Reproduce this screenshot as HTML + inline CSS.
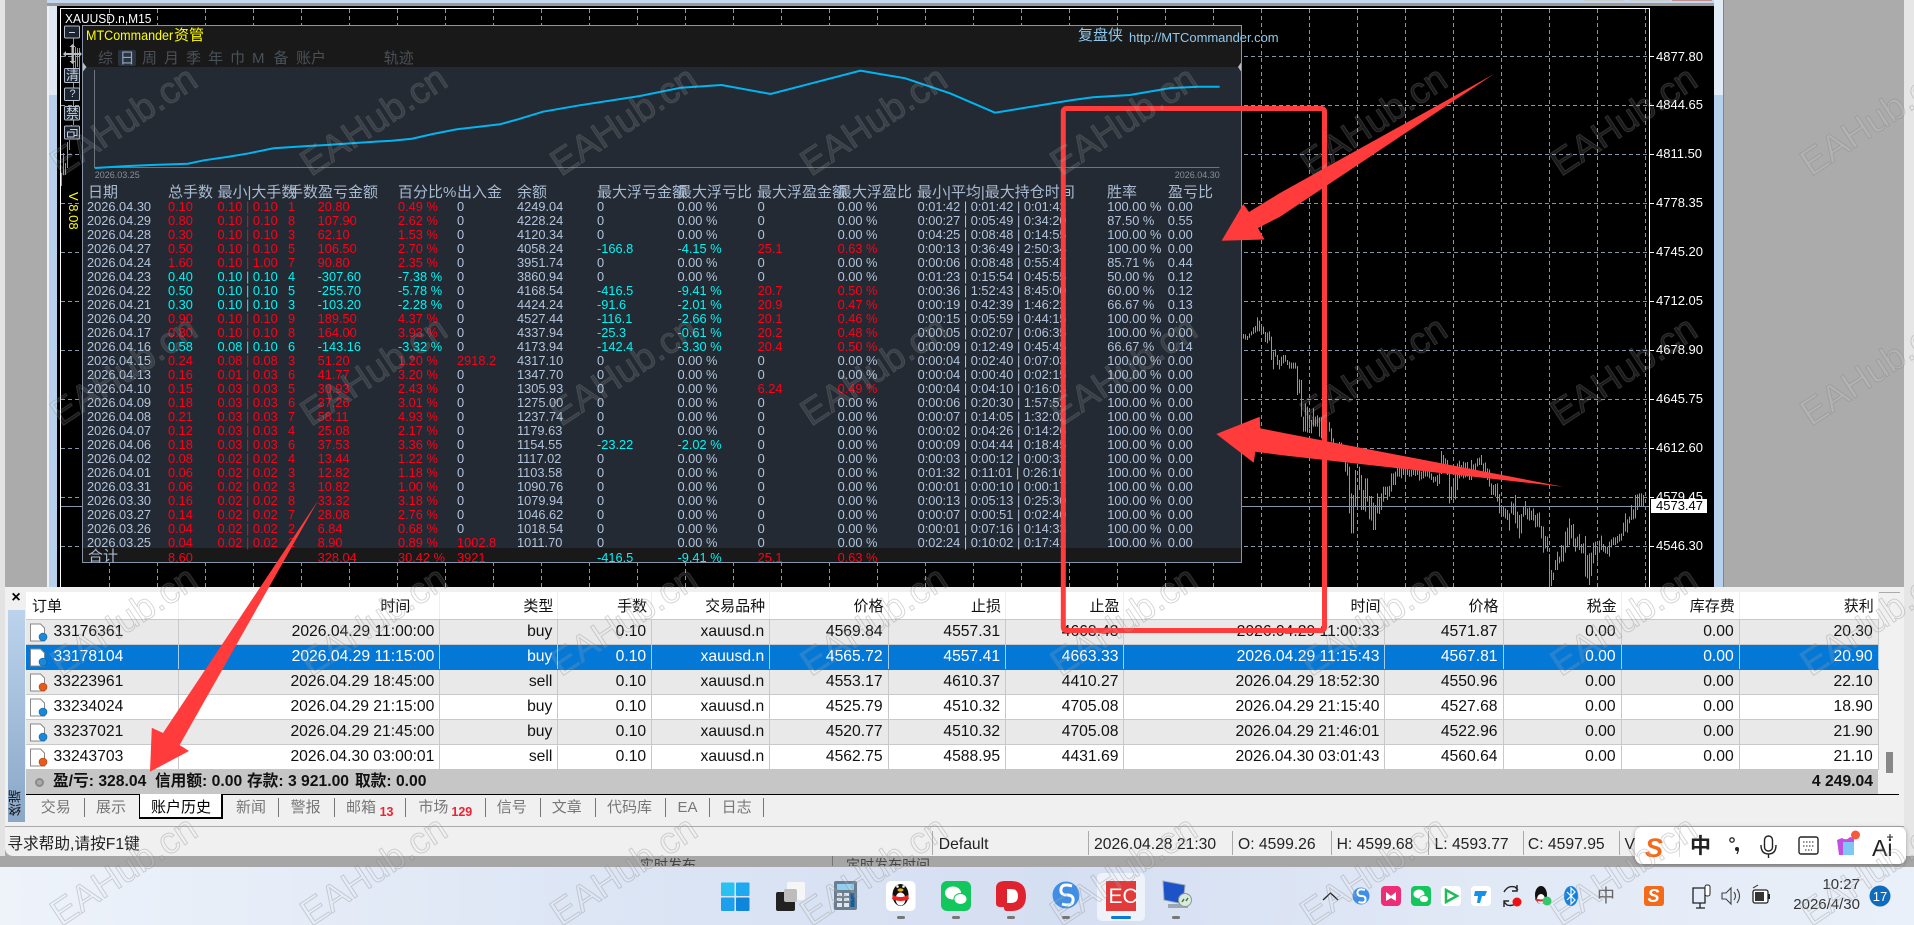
<!DOCTYPE html>
<html lang="zh"><head><meta charset="utf-8"><title>MTCommander</title>
<style>
*{box-sizing:border-box}
html,body{margin:0;padding:0;width:1914px;height:925px;overflow:hidden;background:#aaa;font-family:"Liberation Sans","Noto Sans CJK SC",sans-serif}
.a{position:absolute}
svg.a{left:0;top:0;overflow:visible}
.r{position:absolute;left:0;height:14px;line-height:14px;font-size:12.8px;color:#b2c4dc;margin-top:1px}
.r span{position:absolute;top:0;white-space:pre}
.r span:nth-child(1){left:87px}.r span:nth-child(2){left:168px}.r span:nth-child(3){left:217.5px}.r span:nth-child(4){left:288px}.r span:nth-child(5){left:317.6px}.r span:nth-child(6){left:398px}.r span:nth-child(7){left:457px}.r span:nth-child(8){left:517px}.r span:nth-child(9){left:597px}.r span:nth-child(10){left:677.5px}.r span:nth-child(11){left:757.6px}.r span:nth-child(12){left:837.6px}.r span:nth-child(13){left:917.6px}.r span:nth-child(14){left:1107.3px}.r span:nth-child(15){left:1167.8px}
.x span:nth-child(n+2):nth-child(-n+6){color:#ff0018}
.y span:nth-child(n+2):nth-child(-n+6){color:#00f6f6}
.r span.R{color:#ff0018}.r span.C{color:#00f6f6}
.h{position:absolute;font-size:15px;line-height:18px;color:#a9bbd2;top:183.5px;white-space:pre}
.t{position:absolute;font-size:15px;line-height:18px;color:#4a5058;top:50px}
.pl{position:absolute;left:1656px;font-size:13px;line-height:14px;color:#fff}
table{position:absolute;left:26px;top:592px;width:1852px;border-collapse:collapse;table-layout:fixed;font-size:15.7px;color:#111}
td,th{height:25px;padding:1px 5px 0 0;text-align:right;border-right:1px solid #c9c9c9;border-bottom:1px solid #c9c9c9;white-space:nowrap;overflow:hidden;font-weight:400}
th{height:27px;font-size:15px;border-right:1px solid #eee;padding-right:4px}
td:first-child,th:first-child{text-align:left;padding-left:27.5px}
th:first-child{padding-left:6px}
tr.g td{background:#e9e9e9}
tr.w td{background:#fff}
tr.s td{background:#0478d7;color:#fff;border-right-color:#a5cdf0;border-bottom-color:#0478d7}
.su{position:absolute;top:772px;font-weight:700;font-size:15.7px;line-height:20px;color:#111;white-space:pre}
.tb{position:absolute;top:798px;font-size:15px;line-height:20px;color:#777}
.sp{position:absolute;top:798px;width:1px;height:19px;background:#777}
.st{position:absolute;top:835px;font-size:15.7px;line-height:20px;color:#222;white-space:pre}
.ss{position:absolute;top:831px;width:1px;height:24px;background:#aaa}
.dot{position:absolute;top:916px;width:8px;height:3px;border-radius:2px;background:#777}
</style></head><body>

<!-- outer backgrounds -->
<div class="a" style="left:0;top:0;width:5px;height:866px;background:#e3e3e3"></div>
<div class="a" style="left:5px;top:0;width:42px;height:590px;background:#ababab"></div>
<div class="a" style="left:47px;top:0;width:2px;height:590px;background:#eef2f7"></div>
<div class="a" style="left:49px;top:0;width:8px;height:95px;background:#dde8f4"></div>
<div class="a" style="left:49px;top:95px;width:8px;height:495px;background:#b7d1ec"></div>
<div class="a" style="left:47px;top:0;width:1667px;height:3px;background:#c4d7ec"></div>
<div class="a" style="left:47px;top:3px;width:1667px;height:3px;background:#9a9a9a"></div>
<div class="a" style="left:1584px;top:0;width:40px;height:1px;background:#ccc"></div>
<div class="a" style="left:1630px;top:0;width:40px;height:1px;background:#ccc"></div>
<div class="a" style="left:1672px;top:0;width:40px;height:1px;background:#c08e8e"></div>
<div class="a" style="left:57px;top:6px;width:1657px;height:582px;background:#000"></div>
<div class="a" style="left:1714px;top:0;width:9px;height:95px;background:#e2ecf7"></div>
<div class="a" style="left:1714px;top:95px;width:9px;height:495px;background:#b7d1ec"></div>
<div class="a" style="left:1723px;top:0;width:1px;height:590px;background:#4f93c6"></div>
<div class="a" style="left:1724px;top:0;width:180px;height:590px;background:#ababab"></div>
<div class="a" style="left:1904px;top:0;width:10px;height:866px;background:#e6e6e6"></div>

<!-- chart -->
<svg class="a" width="1914" height="925" viewBox="0 0 1914 925">
<path fill="none" stroke="#8797aa" stroke-dasharray="4 3" d="M109.5 9V587M157.5 9V587M205.5 9V587M253.5 9V587M301.5 9V587M349.5 9V587M397.5 9V587M445.5 9V587M493.5 9V587M541.5 9V587M589.5 9V587M637.5 9V587M685.5 9V587M733.5 9V587M781.5 9V587M829.5 9V587M877.5 9V587M925.5 9V587M973.5 9V587M1021.5 9V587M1069.5 9V587M1117.5 9V587M1165.5 9V587M1213.5 9V587M1261.5 9V587M1309.5 9V587M1357.5 9V587M1405.5 9V587M1453.5 9V587M1501.5 9V587M1549.5 9V587M1597.5 9V587M1645.5 9V587"/>
<path fill="none" stroke="#8797aa" stroke-dasharray="4 3" d="M61 56.5H1650M61 105.5H1650M61 154.5H1650M61 203.5H1650M61 252.5H1650M61 301.5H1650M61 350.5H1650M61 399.5H1650M61 448.5H1650M61 497.5H1650M61 546.5H1650"/>
<path fill="none" stroke="#8797aa" d="M61 506.5H1650"/>
<path fill="none" stroke="#fff" d="M60.5 587V8.5H1649.5V587"/>
<path fill="none" stroke="#fff" d="M1650 56.5H1654M1650 105.5H1654M1650 154.5H1654M1650 203.5H1654M1650 252.5H1654M1650 301.5H1654M1650 350.5H1654M1650 399.5H1654M1650 448.5H1654M1650 497.5H1654M1650 546.5H1654"/>
<g transform="translate(1242.5 310) scale(.33333)" stroke="#14f014" stroke-width="3" fill="none">
<path d="M3 72V86M9 73V89M15 78V90M21 70V84M27 64V76M33 52V72M39 48V68M45 22V64M51 32V64M57 48V72M63 50V72M69 66V96M75 68V100M81 64V92M87 80V150M93 125V178M99 118V140M105 135V165M111 150V178M117 140V168M123 135V160M129 135V155M135 150V165M141 155V176M147 158V176M153 158V176M159 158V176M165 168V255M171 208V250M177 210V320M183 320V365M189 280V365M195 290V368M201 315V355M207 330V370M213 295V350M219 320V350M225 316V350M231 322V380M237 322V385M243 330V390M261 336V365M267 355V395M273 385V400M291 396V410M297 398V415M303 405V455M309 455V485M315 460V497M321 470V610M327 550V670M333 555V670M339 480V590M345 530V600M351 470V540M357 495V600M363 540V600M369 505V605M375 505V575M381 558V628M387 558V632M393 578V660M399 585V660M405 550V610M411 565V612M417 550V600M423 530V575M429 530V555M435 530V570M441 528V560M447 490V545M453 490V525M459 485V525M465 470V500M471 470V500M477 470V505M483 475V495M489 475V505M495 470V495M501 480V500M507 480V500M513 480V495M519 480V498M525 470V495M531 480V512M537 485V508M543 480V505M549 480V500M555 483V500M561 485V505M567 490V510M573 500V518M579 500V515M585 495V528M591 490V522M597 423V492M603 435V470M609 445V480M615 450V490M621 490V580M627 530V570"/>
</g>
<g transform="translate(1445.17 400) scale(.33333)" stroke="#14f014" stroke-width="3" fill="none">
<path d="M1 178V200M7 185V225M13 220V310M19 262V295M25 235V295M31 210V298M37 190V270M43 182V235M49 195V230M55 185V235M61 188V232M67 186V230M73 205V240M79 180V240M85 193V225M91 190V210M97 175V200M103 173V195M109 165V195M115 190V215M121 187V220M127 205V240M133 208V260M139 250V285M145 255V285M151 252V290M157 250V305M163 282V340M169 315V345M175 320V350M181 325V355M187 330V360M193 340V392M199 305V340M205 310V345M211 285V370M217 335V385M223 345V415M229 342V400M235 318V350M241 303V345M247 325V358M253 322V362M259 332V360M265 325V362M271 345V382M277 340V380M283 337V382M289 378V415M295 380V458M301 408V445M307 410V455M313 462V555M319 510V558M325 518V540M331 480V510M337 455V510M343 470V490M349 435V485M355 437V485M361 395V458M367 383V442M373 355V435M379 375V415M385 372V440M391 415V455M397 410V442M403 402V450M409 432V460M415 430V460M421 408V530M427 465V535M433 460V555M439 458V528M445 428V490M451 425V465M457 440V485M463 422V458M469 407V450M475 432V455M481 438V460M487 440V462M493 425V470M499 418V442M505 412V435M511 412V435M517 408V430M523 402V425M529 400V422M535 368V408M541 340V395M547 358V398M553 350V370M559 315V360M565 328V358M571 285V355M577 283V330M583 280V320M589 280V318M595 285V320"/>
</g>
<path stroke="#14f014" fill="none" d="M61.5 173V186M63.5 153V175M65.5 163V175M67.5 142V168M69.5 140V150M71.5 125V138M73.5 38V125M75.5 47V68M77.5 48V67M79.5 48V90"/>
</svg>

<div class="a" style="left:64.5px;top:11px;font-size:13px;line-height:15px;color:#fff;transform:scaleX(.92);transform-origin:0 0;white-space:pre">XAUUSD.n,M15</div>
<div class="pl" style="top:50px">4877.80</div><div class="pl" style="top:98px">4844.65</div><div class="pl" style="top:147px">4811.50</div><div class="pl" style="top:196px">4778.35</div><div class="pl" style="top:245px">4745.20</div><div class="pl" style="top:294px">4712.05</div><div class="pl" style="top:343px">4678.90</div><div class="pl" style="top:392px">4645.75</div><div class="pl" style="top:441px">4612.60</div><div class="pl" style="top:490px">4579.45</div><div class="pl" style="top:539px">4546.30</div>
<div class="a" style="left:1651px;top:499px;width:56px;height:14px;background:#fff;color:#000;font-size:13px;line-height:14px;padding-left:5px">4573.47</div>

<!-- panel -->
<div class="a" style="left:81.5px;top:25px;width:1160.5px;height:538px;background:#232a33;border:1px solid #8595ab"></div>
<div class="a" style="left:82.5px;top:26px;width:1158.5px;height:41px;background:#191919"></div>
<div class="a" style="left:82.5px;top:548px;width:1158.5px;height:14px;background:#191919"></div>
<div class="a" style="left:118px;top:50px;width:18px;height:16px;background:#2a3340;border-radius:2px"></div>
<div class="a" style="left:86px;top:27px;font-size:15px;line-height:18px;color:#ffff00;white-space:pre"><span style="display:inline-block;font-size:13.5px;transform:scaleX(.93);transform-origin:0 50%;width:88px">MTCommander</span>资管</div>
<div class="a" style="left:1078px;top:27px;font-size:15px;line-height:18px;color:#8fc9ee">复盘侠</div>
<div class="a" style="left:1129px;top:30px;font-size:13px;line-height:16px;color:#8fc9ee;white-space:pre;letter-spacing:-.03px">http://MTCommander.com</div>
<div class="t" style="left:98px">综</div><div class="t" style="left:119.6px;color:#94a6bc">日</div><div class="t" style="left:142px">周</div><div class="t" style="left:164px">月</div><div class="t" style="left:186px">季</div><div class="t" style="left:208px">年</div><div class="t" style="left:230px">巾</div><div class="t" style="left:252px">M</div><div class="t" style="left:273.5px">备</div><div class="t" style="left:296px">账户</div><div class="t" style="left:383.7px">轨迹</div>

<svg class="a" width="1914" height="925" viewBox="0 0 1914 925">
<path fill="none" stroke="#6f757c" d="M94.5 70V167.5H1219.5"/>
<polyline fill="none" stroke="#00b6f2" stroke-width="2" points="94.7,168 128.6,166 151,165 173.5,164.3 187.8,163.7 204,160.3 228.6,156.7 249,153.3 273.5,148.3 308,146 326.5,145 359,142.7 391.8,140.7 412,138.7 432.7,134 457,129.3 500,124.3 518,119.3 543,111.7 579.6,105.3 640,96 680.8,87.7 721.6,85 770.6,94 815.5,82.3 860.4,70.7 905.3,78.3 950,93.3 995,112.7 1072.7,100 1093,97.3 1129.8,95 1170.6,88 1199,86.7 1219.6,86.7"/>
<path fill="#bbb" d="M83 62.5l3.5 4.5l-3.5 4.5zM1241 62.5l-3 4.5l3 4.5z"/>
<text x="94.7" y="178" font-size="9" fill="#8a9097" font-family="Liberation Sans">2026.03.25</text>
<text x="1174.7" y="178" font-size="9" fill="#8a9097" font-family="Liberation Sans">2026.04.30</text>
<!-- left buttons -->
<g fill="#1c2430" stroke="#b3bfce">
<rect x="64.5" y="26" width="15" height="12" rx="1"/><rect x="64.5" y="68.5" width="15" height="14" rx="1"/><rect x="64.5" y="88" width="15" height="12.5" rx="1"/><rect x="64.5" y="106.5" width="15" height="13.5" rx="1"/><rect x="64.5" y="126" width="15" height="13" rx="1"/>
</g>
<path stroke="#c8d2de" fill="none" d="M69 32.5H75"/>
<path fill="none" stroke="#bcbcbc" stroke-width="2" d="M72.5 45V63M64 54H81"/>
<path fill="#bcbcbc" d="M72.5 44l-3 3h6zM72.5 64l-3-3h6zM63 54l3-3v6zM82 54l-3-3v6z"/>
<path fill="none" stroke="#c8d2de" d="M70 129.5h7v6h-3M67.5 132h6.5v5h-6.5z"/>
</svg>
<div class="a" style="left:65px;top:68px;width:15px;text-align:center;font-size:13px;line-height:15px;color:#c8d2de">清</div>
<div class="a" style="left:65px;top:87px;width:15px;text-align:center;font-size:11px;line-height:14px;color:#c8d2de">?</div>
<div class="a" style="left:65px;top:106px;width:15px;text-align:center;font-size:13px;line-height:15px;color:#c8d2de">禁</div>
<div class="a" style="left:66px;top:192px;font-size:13px;line-height:14px;color:#ffff00;writing-mode:vertical-rl;white-space:pre">V 8.08</div>

<!-- panel header row -->
<div class="h" style="left:88px">日期</div><div class="h" style="left:168px">总手数</div><div class="h" style="left:217.5px">最小|大手数</div><div class="h" style="left:288px">手数</div><div class="h" style="left:318px">盈亏金额</div><div class="h" style="left:398px">百分比%</div><div class="h" style="left:457px">出入金</div><div class="h" style="left:517px">余额</div><div class="h" style="left:597px">最大浮亏金额</div><div class="h" style="left:677px">最大浮亏比</div><div class="h" style="left:757px">最大浮盈金额</div><div class="h" style="left:837px">最大浮盈比</div><div class="h" style="left:917px">最小|平均|最大持仓时间</div><div class="h" style="left:1107px">胜率</div><div class="h" style="left:1168px">盈亏比</div>

<div class="r x" style="top:199px"><span>2026.04.30</span><span>0.10</span><span>0.10 | 0.10</span><span>1</span><span>20.80</span><span>0.49 %</span><span>0</span><span>4249.04</span><span>0</span><span>0.00 %</span><span>0</span><span>0.00 %</span><span>0:01:42 | 0:01:42 | 0:01:42</span><span>100.00 %</span><span>0.00</span></div>
<div class="r x" style="top:213px"><span>2026.04.29</span><span>0.80</span><span>0.10 | 0.10</span><span>8</span><span>107.90</span><span>2.62 %</span><span>0</span><span>4228.24</span><span>0</span><span>0.00 %</span><span>0</span><span>0.00 %</span><span>0:00:27 | 0:05:49 | 0:34:20</span><span>87.50 %</span><span>0.55</span></div>
<div class="r x" style="top:227px"><span>2026.04.28</span><span>0.30</span><span>0.10 | 0.10</span><span>3</span><span>62.10</span><span>1.53 %</span><span>0</span><span>4120.34</span><span>0</span><span>0.00 %</span><span>0</span><span>0.00 %</span><span>0:04:25 | 0:08:48 | 0:14:55</span><span>100.00 %</span><span>0.00</span></div>
<div class="r x" style="top:241px"><span>2026.04.27</span><span>0.50</span><span>0.10 | 0.10</span><span>5</span><span>106.50</span><span>2.70 %</span><span>0</span><span>4058.24</span><span class="C">-166.8</span><span class="C">-4.15 %</span><span class="R">25.1</span><span class="R">0.63 %</span><span>0:00:13 | 0:36:49 | 2:50:34</span><span>100.00 %</span><span>0.00</span></div>
<div class="r x" style="top:255px"><span>2026.04.24</span><span>1.60</span><span>0.10 | 1.00</span><span>7</span><span>90.80</span><span>2.35 %</span><span>0</span><span>3951.74</span><span>0</span><span>0.00 %</span><span>0</span><span>0.00 %</span><span>0:00:06 | 0:08:48 | 0:55:47</span><span>85.71 %</span><span>0.44</span></div>
<div class="r y" style="top:269px"><span>2026.04.23</span><span>0.40</span><span>0.10 | 0.10</span><span>4</span><span>-307.60</span><span>-7.38 %</span><span>0</span><span>3860.94</span><span>0</span><span>0.00 %</span><span>0</span><span>0.00 %</span><span>0:01:23 | 0:15:54 | 0:45:55</span><span>50.00 %</span><span>0.12</span></div>
<div class="r y" style="top:283px"><span>2026.04.22</span><span>0.50</span><span>0.10 | 0.10</span><span>5</span><span>-255.70</span><span>-5.78 %</span><span>0</span><span>4168.54</span><span class="C">-416.5</span><span class="C">-9.41 %</span><span class="R">20.7</span><span class="R">0.50 %</span><span>0:00:36 | 1:52:43 | 8:45:00</span><span>60.00 %</span><span>0.12</span></div>
<div class="r y" style="top:297px"><span>2026.04.21</span><span>0.30</span><span>0.10 | 0.10</span><span>3</span><span>-103.20</span><span>-2.28 %</span><span>0</span><span>4424.24</span><span class="C">-91.6</span><span class="C">-2.01 %</span><span class="R">20.9</span><span class="R">0.47 %</span><span>0:00:19 | 0:42:39 | 1:46:22</span><span>66.67 %</span><span>0.13</span></div>
<div class="r x" style="top:311px"><span>2026.04.20</span><span>0.90</span><span>0.10 | 0.10</span><span>9</span><span>189.50</span><span>4.37 %</span><span>0</span><span>4527.44</span><span class="C">-116.1</span><span class="C">-2.66 %</span><span class="R">20.1</span><span class="R">0.46 %</span><span>0:00:15 | 0:05:59 | 0:44:15</span><span>100.00 %</span><span>0.00</span></div>
<div class="r x" style="top:325px"><span>2026.04.17</span><span>0.80</span><span>0.10 | 0.10</span><span>8</span><span>164.00</span><span>3.93 %</span><span>0</span><span>4337.94</span><span class="C">-25.3</span><span class="C">-0.61 %</span><span class="R">20.2</span><span class="R">0.48 %</span><span>0:00:05 | 0:02:07 | 0:06:35</span><span>100.00 %</span><span>0.00</span></div>
<div class="r y" style="top:339px"><span>2026.04.16</span><span>0.58</span><span>0.08 | 0.10</span><span>6</span><span>-143.16</span><span>-3.32 %</span><span>0</span><span>4173.94</span><span class="C">-142.4</span><span class="C">-3.30 %</span><span class="R">20.4</span><span class="R">0.50 %</span><span>0:00:09 | 0:12:49 | 0:45:45</span><span>66.67 %</span><span>0.14</span></div>
<div class="r x" style="top:353px"><span>2026.04.15</span><span>0.24</span><span>0.08 | 0.08</span><span>3</span><span>51.20</span><span>1.20 %</span><span class="R">2918.2</span><span>4317.10</span><span>0</span><span>0.00 %</span><span>0</span><span>0.00 %</span><span>0:00:04 | 0:02:40 | 0:07:03</span><span>100.00 %</span><span>0.00</span></div>
<div class="r x" style="top:367px"><span>2026.04.13</span><span>0.16</span><span>0.01 | 0.03</span><span>6</span><span>41.77</span><span>3.20 %</span><span>0</span><span>1347.70</span><span>0</span><span>0.00 %</span><span>0</span><span>0.00 %</span><span>0:00:04 | 0:00:40 | 0:02:15</span><span>100.00 %</span><span>0.00</span></div>
<div class="r x" style="top:381px"><span>2026.04.10</span><span>0.15</span><span>0.03 | 0.03</span><span>5</span><span>30.93</span><span>2.43 %</span><span>0</span><span>1305.93</span><span>0</span><span>0.00 %</span><span class="R">6.24</span><span class="R">0.49 %</span><span>0:00:04 | 0:04:10 | 0:16:03</span><span>100.00 %</span><span>0.00</span></div>
<div class="r x" style="top:395px"><span>2026.04.09</span><span>0.18</span><span>0.03 | 0.03</span><span>6</span><span>37.26</span><span>3.01 %</span><span>0</span><span>1275.00</span><span>0</span><span>0.00 %</span><span>0</span><span>0.00 %</span><span>0:00:06 | 0:20:30 | 1:57:52</span><span>100.00 %</span><span>0.00</span></div>
<div class="r x" style="top:409px"><span>2026.04.08</span><span>0.21</span><span>0.03 | 0.03</span><span>7</span><span>58.11</span><span>4.93 %</span><span>0</span><span>1237.74</span><span>0</span><span>0.00 %</span><span>0</span><span>0.00 %</span><span>0:00:07 | 0:14:05 | 1:32:02</span><span>100.00 %</span><span>0.00</span></div>
<div class="r x" style="top:423px"><span>2026.04.07</span><span>0.12</span><span>0.03 | 0.03</span><span>4</span><span>25.08</span><span>2.17 %</span><span>0</span><span>1179.63</span><span>0</span><span>0.00 %</span><span>0</span><span>0.00 %</span><span>0:00:02 | 0:04:26 | 0:14:26</span><span>100.00 %</span><span>0.00</span></div>
<div class="r x" style="top:437px"><span>2026.04.06</span><span>0.18</span><span>0.03 | 0.03</span><span>6</span><span>37.53</span><span>3.36 %</span><span>0</span><span>1154.55</span><span class="C">-23.22</span><span class="C">-2.02 %</span><span>0</span><span>0.00 %</span><span>0:00:09 | 0:04:44 | 0:18:45</span><span>100.00 %</span><span>0.00</span></div>
<div class="r x" style="top:451px"><span>2026.04.02</span><span>0.08</span><span>0.02 | 0.02</span><span>4</span><span>13.44</span><span>1.22 %</span><span>0</span><span>1117.02</span><span>0</span><span>0.00 %</span><span>0</span><span>0.00 %</span><span>0:00:03 | 0:00:12 | 0:00:32</span><span>100.00 %</span><span>0.00</span></div>
<div class="r x" style="top:465px"><span>2026.04.01</span><span>0.06</span><span>0.02 | 0.02</span><span>3</span><span>12.82</span><span>1.18 %</span><span>0</span><span>1103.58</span><span>0</span><span>0.00 %</span><span>0</span><span>0.00 %</span><span>0:01:32 | 0:11:01 | 0:26:10</span><span>100.00 %</span><span>0.00</span></div>
<div class="r x" style="top:479px"><span>2026.03.31</span><span>0.06</span><span>0.02 | 0.02</span><span>3</span><span>10.82</span><span>1.00 %</span><span>0</span><span>1090.76</span><span>0</span><span>0.00 %</span><span>0</span><span>0.00 %</span><span>0:00:01 | 0:00:10 | 0:00:17</span><span>100.00 %</span><span>0.00</span></div>
<div class="r x" style="top:493px"><span>2026.03.30</span><span>0.16</span><span>0.02 | 0.02</span><span>8</span><span>33.32</span><span>3.18 %</span><span>0</span><span>1079.94</span><span>0</span><span>0.00 %</span><span>0</span><span>0.00 %</span><span>0:00:13 | 0:05:13 | 0:25:30</span><span>100.00 %</span><span>0.00</span></div>
<div class="r x" style="top:507px"><span>2026.03.27</span><span>0.14</span><span>0.02 | 0.02</span><span>7</span><span>28.08</span><span>2.76 %</span><span>0</span><span>1046.62</span><span>0</span><span>0.00 %</span><span>0</span><span>0.00 %</span><span>0:00:07 | 0:00:51 | 0:02:40</span><span>100.00 %</span><span>0.00</span></div>
<div class="r x" style="top:521px"><span>2026.03.26</span><span>0.04</span><span>0.02 | 0.02</span><span>2</span><span>6.84</span><span>0.68 %</span><span>0</span><span>1018.54</span><span>0</span><span>0.00 %</span><span>0</span><span>0.00 %</span><span>0:00:01 | 0:07:16 | 0:14:33</span><span>100.00 %</span><span>0.00</span></div>
<div class="r x" style="top:535px"><span>2026.03.25</span><span>0.04</span><span>0.02 | 0.02</span><span>2</span><span>8.90</span><span>0.89 %</span><span class="R">1002.8</span><span>1011.70</span><span>0</span><span>0.00 %</span><span>0</span><span>0.00 %</span><span>0:02:24 | 0:10:02 | 0:17:41</span><span>100.00 %</span><span>0.00</span></div>
<div class="h" style="left:88px;top:548px">合计</div>
<div class="r" style="top:550px"><span></span><span class="R">8.60</span><span></span><span></span><span class="R">328.04</span><span class="R">30.42 %</span><span class="R">3921</span><span></span><span class="C">-416.5</span><span class="C">-9.41 %</span><span class="R">25.1</span><span class="R">0.63 %</span><span></span><span></span><span></span></div>

<!-- bottom window -->
<div class="a" style="left:0;top:856px;width:1914px;height:11px;background:#a6a6a6"></div>
<div class="a" style="left:640px;top:856px;font-size:14px;line-height:18px;height:10px;overflow:hidden;color:#444;white-space:pre">实时发布</div>
<div class="a" style="left:846px;top:856px;font-size:14px;line-height:18px;height:10px;overflow:hidden;color:#444;white-space:pre">定时发布时间</div>
<div class="a" style="left:832px;top:856px;width:1px;height:10px;background:#777"></div>
<div class="a" style="left:5px;top:587px;width:1899px;height:269px;background:#f0f0f0;border-radius:0 0 8px 8px"></div>
<div class="a" style="left:26px;top:592px;width:1874px;height:203px;background:#f1f1f1;border-top:1px solid #aaa"></div>
<div class="a" style="left:8px;top:610px;width:16.5px;height:212px;background:linear-gradient(#bcd3ec,#8aa7c8)"></div>
<div class="a" style="left:9px;top:590px;width:14px;font-size:16px;line-height:16px;text-align:center;color:#000;font-weight:700">×</div>
<div class="a" style="left:9px;top:790px;font-size:13px;line-height:14px;writing-mode:vertical-rl;transform:rotate(180deg);color:#111">终端</div>

<table>
<colgroup><col style="width:152.7px"><col style="width:261.2px"><col style="width:118px"><col style="width:93.8px"><col style="width:118px"><col style="width:118.4px"><col style="width:117.5px"><col style="width:118.4px"><col style="width:261px"><col style="width:118.1px"><col style="width:118.1px"><col style="width:118.1px"><col style="width:139px"></colgroup>
<tr style="background:#fff"><th>订单</th><th><span style="padding-right:25px">时间</span></th><th>类型</th><th>手数</th><th>交易品种</th><th>价格</th><th>止损</th><th>止盈</th><th>时间</th><th>价格</th><th>税金</th><th>库存费</th><th>获利</th></tr>
<tr class="g"><td>33176361</td><td>2026.04.29 11:00:00</td><td>buy</td><td>0.10</td><td>xauusd.n</td><td>4569.84</td><td>4557.31</td><td>4663.43</td><td>2026.04.29 11:00:33</td><td>4571.87</td><td>0.00</td><td>0.00</td><td>20.30</td></tr>
<tr class="s"><td>33178104</td><td>2026.04.29 11:15:00</td><td>buy</td><td>0.10</td><td>xauusd.n</td><td>4565.72</td><td>4557.41</td><td>4663.33</td><td>2026.04.29 11:15:43</td><td>4567.81</td><td>0.00</td><td>0.00</td><td>20.90</td></tr>
<tr class="g"><td>33223961</td><td>2026.04.29 18:45:00</td><td>sell</td><td>0.10</td><td>xauusd.n</td><td>4553.17</td><td>4610.37</td><td>4410.27</td><td>2026.04.29 18:52:30</td><td>4550.96</td><td>0.00</td><td>0.00</td><td>22.10</td></tr>
<tr class="w"><td>33234024</td><td>2026.04.29 21:15:00</td><td>buy</td><td>0.10</td><td>xauusd.n</td><td>4525.79</td><td>4510.32</td><td>4705.08</td><td>2026.04.29 21:15:40</td><td>4527.68</td><td>0.00</td><td>0.00</td><td>18.90</td></tr>
<tr class="g"><td>33237021</td><td>2026.04.29 21:45:00</td><td>buy</td><td>0.10</td><td>xauusd.n</td><td>4520.77</td><td>4510.32</td><td>4705.08</td><td>2026.04.29 21:46:01</td><td>4522.96</td><td>0.00</td><td>0.00</td><td>21.90</td></tr>
<tr class="w"><td>33243703</td><td>2026.04.30 03:00:01</td><td>sell</td><td>0.10</td><td>xauusd.n</td><td>4562.75</td><td>4588.95</td><td>4431.69</td><td>2026.04.30 03:01:43</td><td>4560.64</td><td>0.00</td><td>0.00</td><td>21.10</td></tr>
</table>

<div class="a" style="left:26px;top:769px;width:1852px;height:25px;background:#c6c6c6"></div>
<div class="a" style="left:26px;top:794px;width:1873px;height:1px;background:#000"></div>
<div class="a" style="left:1885.5px;top:752px;width:7px;height:21px;background:#888"></div>
<div class="a" style="left:34.5px;top:777.5px;width:9px;height:9px;border-radius:50%;background:#aaa;border:2px solid #8a8a8a"></div>
<div class="su" style="left:53px">盈/亏: 328.04</div><div class="su" style="left:155px">信用额: 0.00</div><div class="su" style="left:247px">存款: 3 921.00</div><div class="su" style="left:355px">取款: 0.00</div>
<div class="su" style="right:41px">4 249.04</div>

<div class="a" style="left:138.5px;top:794px;width:84.5px;height:25px;background:#fff;border:1px solid #000;border-top:0;border-width:0 2px 2px 1px"></div>
<div class="tb" style="left:40.8px">交易</div><div class="sp" style="left:83.7px"></div>
<div class="tb" style="left:96px">展示</div>
<div class="tb" style="left:151px;color:#000">账户历史</div>
<div class="tb" style="left:236px">新闻</div><div class="sp" style="left:278.4px"></div>
<div class="tb" style="left:290.6px">警报</div><div class="sp" style="left:333.5px"></div>
<div class="tb" style="left:346px">邮箱</div><div class="tb" style="left:379.6px;top:802px;font-size:12.5px;font-weight:700;color:#ee2233">13</div><div class="sp" style="left:405.3px"></div>
<div class="tb" style="left:418.4px">市场</div><div class="tb" style="left:451.4px;top:802px;font-size:12.5px;font-weight:700;color:#ee2233">129</div><div class="sp" style="left:484.5px"></div>
<div class="tb" style="left:496.7px">信号</div><div class="sp" style="left:539.6px"></div>
<div class="tb" style="left:551.8px">文章</div><div class="sp" style="left:594.7px"></div>
<div class="tb" style="left:607px">代码库</div><div class="sp" style="left:664.5px"></div>
<div class="tb" style="left:677.5px">EA</div><div class="sp" style="left:708.6px"></div>
<div class="tb" style="left:721.6px">日志</div><div class="sp" style="left:763.3px"></div>

<div class="a" style="left:5px;top:826px;width:1899px;height:1px;background:#aaa"></div>
<div class="st" style="left:7.3px">寻求帮助,请按F1键</div>
<div class="ss" style="left:932px"></div><div class="st" style="left:938.8px">Default</div>
<div class="ss" style="left:1088px"></div><div class="st" style="left:1094px">2026.04.28 21:30</div>
<div class="ss" style="left:1232px"></div><div class="st" style="left:1238px">O: 4599.26</div>
<div class="ss" style="left:1330.5px"></div><div class="st" style="left:1336.6px">H: 4599.68</div>
<div class="ss" style="left:1428.4px"></div><div class="st" style="left:1434.5px">L: 4593.77</div>
<div class="ss" style="left:1522.6px"></div><div class="st" style="left:1527.9px">C: 4597.95</div>
<div class="ss" style="left:1618.5px"></div><div class="st" style="left:1624.5px">V</div>

<!-- taskbar -->
<div class="a" style="left:0;top:867px;width:1914px;height:58px;background:linear-gradient(90deg,#eef3fa 0%,#dde6f5 30%,#d5dff2 55%,#e0e8f6 75%,#eaf0f9 100%)"></div>
<div class="a" style="left:1097px;top:872.5px;width:48px;height:48px;background:#eef2f9;border-radius:5px"></div>

<svg class="a" width="1914" height="925" viewBox="0 0 1914 925">
<!-- order icons -->
<g fill="#fff" stroke="#888"><path d="M30.5 624h10l4 4v13h-14z"/><path d="M30.5 649h10l4 4v13h-14z"/><path d="M30.5 674h10l4 4v13h-14z"/><path d="M30.5 699h10l4 4v13h-14z"/><path d="M30.5 724h10l4 4v13h-14z"/><path d="M30.5 749h10l4 4v13h-14z"/></g>
<g fill="#1a88d8" stroke="#0d5ea0" stroke-width=".6"><circle cx="43" cy="637" r="4"/><circle cx="43" cy="662" r="4"/><circle cx="43" cy="712" r="4"/><circle cx="43" cy="737" r="4"/></g>
<g fill="#e85a1a" stroke="#a83d10" stroke-width=".6"><circle cx="43" cy="687" r="4"/><circle cx="43" cy="762" r="4"/></g>
<!-- windows logo -->
<rect x="721" y="882.5" width="13.5" height="13.5" fill="#29c0f2" rx="1"/><rect x="736" y="882.5" width="13.5" height="13.5" fill="#1ea8ee" rx="1"/><rect x="721" y="897.5" width="13.5" height="13.5" fill="#1ca0ec" rx="1"/><rect x="736" y="897.5" width="13.5" height="13.5" fill="#0f86dc" rx="1"/>
<rect x="787" y="882" width="18" height="18" rx="2" fill="#f6f6f6"/><rect x="776" y="892" width="19" height="19" rx="2" fill="#222"/><rect x="784" y="889" width="13" height="13" rx="2" fill="#bdbdbd"/>
<rect x="834" y="881" width="23" height="29" rx="2" fill="#6b7d90"/><rect x="837" y="884" width="17" height="6" fill="#8fd0ee"/>
<path d="M837 893h5v3h-5zM844 893h5v3h-5zM837 898h5v3h-5zM844 898h5v3h-5zM837 903h5v4h-5zM844 903h5v4h-5z" fill="#dfe5ea"/><path d="M850.5 893h4v14h-4z" fill="#0e5f9c"/>
<rect x="886" y="881" width="29.5" height="30" rx="5" fill="#fff"/><ellipse cx="900.5" cy="895" rx="8" ry="11" fill="#111"/><ellipse cx="900.5" cy="899" rx="5" ry="6.5" fill="#fff"/><path d="M893 895q7.5 4 15 0l1 4q-8 4-17 0z" fill="#e22"/><ellipse cx="900.5" cy="890" rx="3" ry="1.6" fill="#f5b20f"/><circle cx="897.5" cy="886.5" r="1.3" fill="#fff"/><circle cx="903.5" cy="886.5" r="1.3" fill="#fff"/>
<rect x="941" y="881" width="30" height="30" rx="6" fill="#13c75d"/><ellipse cx="953" cy="893" rx="8" ry="6.5" fill="#fff"/><ellipse cx="960.5" cy="899" rx="6.5" ry="5.5" fill="#fff" stroke="#13c75d"/>
<path d="M996 888q0-7 9-7h6q15 0 15 15t-15 15h-4q-3 0-3-3v-1h-4q-4 0-4-4z" fill="#e0222e"/><path d="M1007 889h4q7 0 7 7t-7 7h-4z" fill="#fff"/>
<circle cx="1066" cy="895" r="13.5" fill="#3f8fe6"/><path d="M1072 886q-10-3-11 3t6 6 6 6-11 3" fill="none" stroke="#fff" stroke-width="3"/>
<rect x="1106" y="881" width="30" height="30" fill="#e23a3a"/>
<text x="1108.5" y="903" font-size="21" fill="#fff" font-family="Liberation Sans">EC</text>
<path d="M1163 881l22 4-2 19-19-4z" fill="#1c54c8" stroke="#9aa7b5"/><path d="M1168 904h20v4h-20z" fill="#9aa7b5"/><circle cx="1185" cy="900" r="6.5" fill="#dfe8e0" stroke="#8a9a8f"/><path d="M1182 902l2-3M1188 898l-2 3" stroke="#1e8a2a" stroke-width="1.5"/>
<!-- tray -->
<path d="M1323 900l7.5-7 7.5 7" fill="none" stroke="#222" stroke-width="1.3"/>
<circle cx="1361" cy="896" r="8.5" fill="#3f8fe6"/><path d="M1365 890q-7-2-7.5 2t4 4 4 4-7 2" fill="none" stroke="#fff" stroke-width="2"/>
<rect x="1381" y="886" width="20" height="20" rx="4" fill="#ee2e74"/><path d="M1386 892l5 4 5-4v9l-5-3-5 3z" fill="#fff"/>
<rect x="1411" y="886" width="20" height="20" rx="4" fill="#13c75d"/><ellipse cx="1419" cy="894" rx="5.5" ry="4.5" fill="#fff"/><ellipse cx="1424" cy="899" rx="4.5" ry="3.5" fill="#fff" stroke="#13c75d" stroke-width=".7"/>
<rect x="1441" y="886" width="20" height="20" rx="4" fill="#fff"/><path d="M1446 890l11 6-11 6z" fill="none" stroke="#1fbb5a" stroke-width="2.5"/>
<rect x="1471" y="886" width="20" height="20" rx="4" fill="#fff"/><path d="M1475 891h12l-2 5h-3l-2 7h-3l1-7h-4z" fill="#1392e8"/>
<path d="M1504 892q4-7 11-5l3 3M1518 901q-4 6-11 4l-3-3M1517 885v6h-5M1504 907v-6h5" fill="none" stroke="#222" stroke-width="1.4"/><circle cx="1517" cy="902" r="4.5" fill="#ee1111"/>
<ellipse cx="1541" cy="895" rx="6" ry="9" fill="#111"/><ellipse cx="1541" cy="899" rx="4" ry="5" fill="#fff"/><path d="M1535 898q6 3 12 0v2q-6 3-12 0z" fill="#e22"/><circle cx="1547" cy="901" r="4.5" fill="#35c76a"/>
<ellipse cx="1571" cy="896" rx="7" ry="10" fill="#1281e0"/><path d="M1567 892l8 8-4 4v-16l4 4-8 8" fill="none" stroke="#fff" stroke-width="1.2"/>
<text x="1597" y="902" font-size="18" fill="#666" font-family="Noto Sans CJK SC">中</text>
<rect x="1644" y="886" width="20" height="20" rx="3" fill="#f26a1a"/><text x="1647.5" y="902" font-size="18" font-weight="700" font-style="italic" fill="#fff" font-family="Liberation Sans">S</text>
<path d="M1693 888h12v15h-12zM1696 908h9M1700 903v5" fill="none" stroke="#222" stroke-width="1.3"/><rect x="1705" y="885" width="5" height="11" rx="2" fill="#fff" stroke="#222"/>
<path d="M1722 893h4l5-5v16l-5-5h-4z" fill="none" stroke="#444" stroke-width="1.1"/><path d="M1734 892q3 4 0 8M1737 889q5 7 0 14" fill="none" stroke="#444" stroke-width="1.1"/>
<rect x="1753" y="890" width="15" height="13" rx="2" fill="#fff" stroke="#222" stroke-width="1.3"/><rect x="1755" y="892" width="9" height="9" fill="#333"/><rect x="1768" y="894" width="2" height="5" fill="#222"/><path d="M1753 888l5-3" stroke="#222"/>
<circle cx="1880" cy="896" r="10.5" fill="#0f6cbd"/>
<text x="1880" y="901" font-size="13" fill="#fff" text-anchor="middle" font-family="Liberation Sans">17</text>
</svg>
<div class="dot" style="left:897px"></div><div class="dot" style="left:952px"></div><div class="dot" style="left:1007px"></div><div class="dot" style="left:1062px"></div><div class="dot" style="left:1111px;width:20px;background:#0a7ad6"></div><div class="dot" style="left:1172px"></div>
<div class="a" style="right:54px;top:876px;font-size:15px;line-height:18px;color:#333">10:27</div>
<div class="a" style="right:54px;top:896px;font-size:15px;line-height:18px;color:#333">2026/4/30</div>

<!-- red annotations -->
<svg class="a" width="1914" height="925" viewBox="0 0 1914 925">
<rect x="1063.3" y="108.5" width="261.2" height="522" rx="3" fill="none" stroke="#ff3b3b" stroke-width="5"/>
<polygon fill="#ff3b3b" points="1494,74 1280,193 1249,212 1243.3,204 1221.6,240.7 1264.5,239.5 1258,228 1280,216.7"/>
<polygon fill="#ff3b3b" points="1563,486.7 1280,432.3 1260.3,428.3 1259.7,416.7 1216.3,434 1253.7,462.7 1255.3,451.7 1280,455"/>
<polygon fill="#ff3b3b" points="318.4,500 163,733 151.8,727.7 150,771.7 189,751 179.6,745"/>
</svg>

<!-- IME bar -->
<div class="a" style="left:1635px;top:827px;width:271px;height:37px;background:#fff;border-radius:7px;box-shadow:0 1px 5px rgba(0,0,0,.3)"></div>
<svg class="a" width="1914" height="925" viewBox="0 0 1914 925">
<text x="1645" y="857" font-size="27" font-weight="700" font-style="italic" fill="#f26a1a" font-family="Liberation Sans">S</text>
<path d="M1679.5 831v26" stroke="#ddd"/>
<text x="1690" y="853" font-size="21" font-weight="700" fill="#222" font-family="Noto Sans CJK SC">中</text>
<circle cx="1732" cy="840" r="2.2" fill="none" stroke="#222" stroke-width="1.3"/><circle cx="1737" cy="849" r="2" fill="#222"/><path d="M1738.5 850l-1.5 4" stroke="#222" stroke-width="1.2"/>
<rect x="1764.5" y="836" width="8" height="15" rx="4" fill="none" stroke="#222" stroke-width="1.4"/><path d="M1761 845q0 9 7.5 9t7.5-9M1768.5 854v4" fill="none" stroke="#222" stroke-width="1.4"/>
<rect x="1799" y="837" width="19" height="17" rx="2" fill="none" stroke="#222" stroke-width="1.4"/><path d="M1803 842h11M1803 846h11M1805 850h7" stroke="#222" stroke-dasharray="1.5 1.5"/>
<path d="M1837 840l5-2q4 3 8-1l4 1v17h-15z" fill="#c24fe0"/><path d="M1843 842h11v13h-11z" fill="#7fc6f5"/><circle cx="1855.5" cy="835" r="4.5" fill="#f55a3c"/>
<text x="1872" y="856" font-size="23" fill="#222" font-family="Liberation Sans">Ai</text><path d="M1890 834v6M1887 837h6" stroke="#222" stroke-width="1.1"/>
</svg>

<!-- watermark -->
<svg class="a" width="1914" height="925" viewBox="0 0 1914 925" font-family="Liberation Sans" font-size="37" fill="#fff" fill-opacity=".1" stroke="#7a7a7a" stroke-opacity=".3">
<text transform="translate(61 177) rotate(-33.5)">EAHub.cn</text><text transform="translate(311 177) rotate(-33.5)">EAHub.cn</text><text transform="translate(561 177) rotate(-33.5)">EAHub.cn</text><text transform="translate(811 177) rotate(-33.5)">EAHub.cn</text><text transform="translate(1061 177) rotate(-33.5)">EAHub.cn</text><text transform="translate(1311 177) rotate(-33.5)">EAHub.cn</text><text transform="translate(1561 177) rotate(-33.5)">EAHub.cn</text><text transform="translate(1811 177) rotate(-33.5)">EAHub.cn</text>
<text transform="translate(61 427) rotate(-33.5)">EAHub.cn</text><text transform="translate(311 427) rotate(-33.5)">EAHub.cn</text><text transform="translate(561 427) rotate(-33.5)">EAHub.cn</text><text transform="translate(811 427) rotate(-33.5)">EAHub.cn</text><text transform="translate(1061 427) rotate(-33.5)">EAHub.cn</text><text transform="translate(1311 427) rotate(-33.5)">EAHub.cn</text><text transform="translate(1561 427) rotate(-33.5)">EAHub.cn</text><text transform="translate(1811 427) rotate(-33.5)">EAHub.cn</text>
<text transform="translate(61 677) rotate(-33.5)">EAHub.cn</text><text transform="translate(311 677) rotate(-33.5)">EAHub.cn</text><text transform="translate(561 677) rotate(-33.5)">EAHub.cn</text><text transform="translate(811 677) rotate(-33.5)">EAHub.cn</text><text transform="translate(1061 677) rotate(-33.5)">EAHub.cn</text><text transform="translate(1311 677) rotate(-33.5)">EAHub.cn</text><text transform="translate(1561 677) rotate(-33.5)">EAHub.cn</text><text transform="translate(1811 677) rotate(-33.5)">EAHub.cn</text>
<text transform="translate(61 927) rotate(-33.5)">EAHub.cn</text><text transform="translate(311 927) rotate(-33.5)">EAHub.cn</text><text transform="translate(561 927) rotate(-33.5)">EAHub.cn</text><text transform="translate(811 927) rotate(-33.5)">EAHub.cn</text><text transform="translate(1061 927) rotate(-33.5)">EAHub.cn</text><text transform="translate(1311 927) rotate(-33.5)">EAHub.cn</text><text transform="translate(1561 927) rotate(-33.5)">EAHub.cn</text><text transform="translate(1811 927) rotate(-33.5)">EAHub.cn</text>
</svg>
</body></html>
